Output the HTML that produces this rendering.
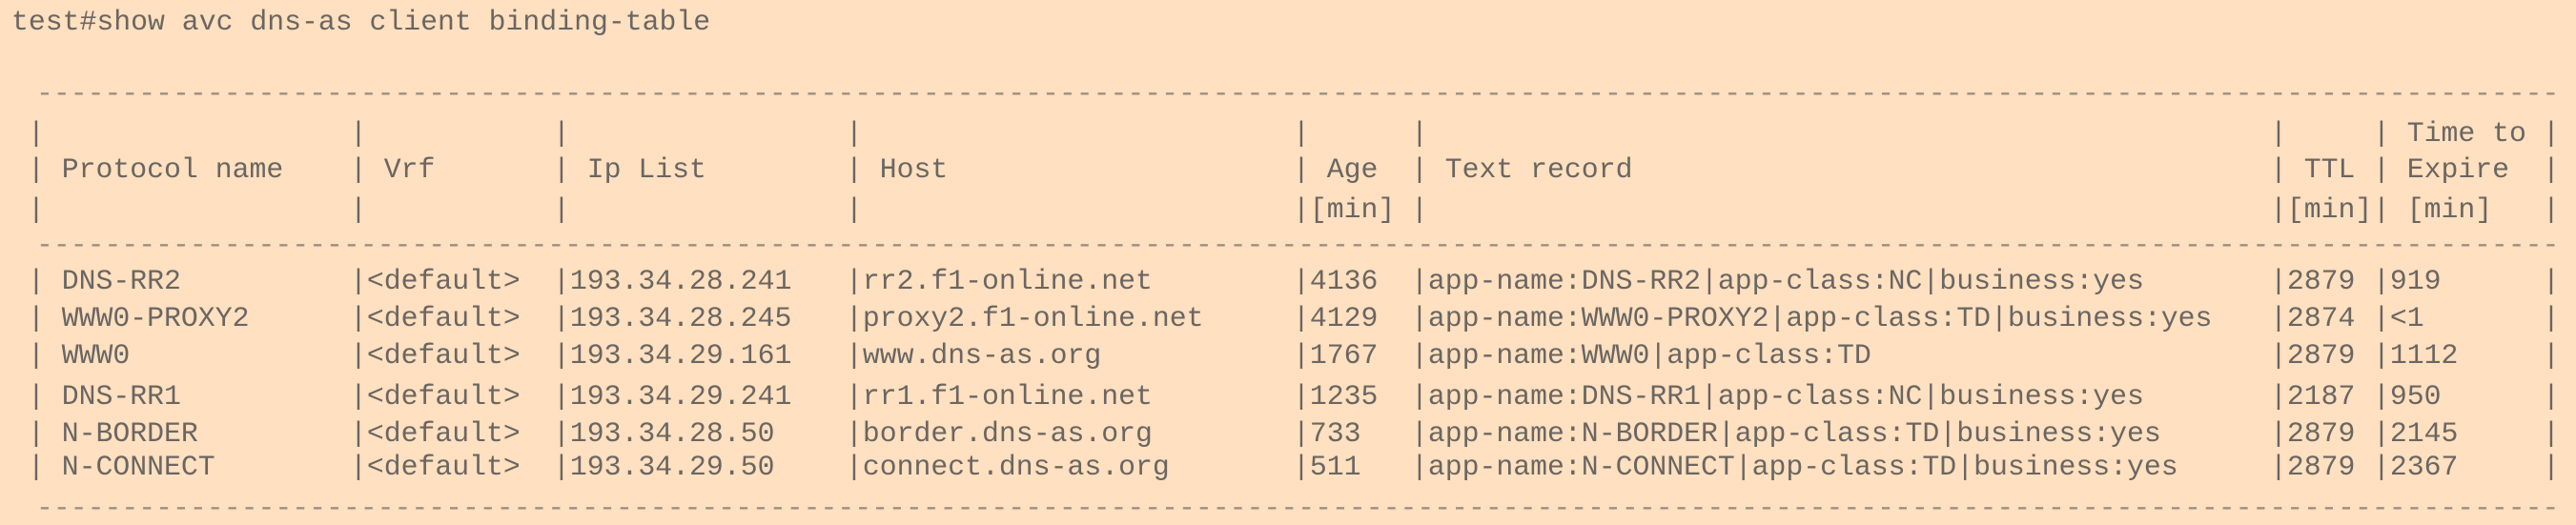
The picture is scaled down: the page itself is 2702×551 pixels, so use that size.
<!DOCTYPE html>
<html><head><meta charset="utf-8"><style>
html,body{margin:0;padding:0;}
body{width:2702px;height:550px;background:#FFE0C0;position:relative;overflow:hidden;
font-family:"Liberation Mono","DejaVu Sans Mono",monospace;font-size:29.8px;color:#6a6662;}
.t{position:absolute;white-space:pre;line-height:36px;height:36px;}
.d{position:absolute;left:38px;width:2644px;overflow:hidden;white-space:pre;color:#9a8e82;line-height:36px;height:36px;}
</style></head><body>
<div class="t" style="left:12px;top:5px">test#show avc dns-as client binding-table</div>
<div class="d" style="top:80px">---------------------------------------------------------------------------------------------------------------------------------------------------------------</div>
<div class="d" style="top:239px">---------------------------------------------------------------------------------------------------------------------------------------------------------------</div>
<div class="d" style="top:515px">---------------------------------------------------------------------------------------------------------------------------------------------------------------</div>
<div id="rows"></div>
<script>
var P=[29,367,580,887,1356,1480,2381,2489,2667];
var rows=[
[122,["|","|","|","|","|","|","|","| Time to","|"]],
[160,["| Protocol name","| Vrf","| Ip List","| Host","| Age","| Text record","| TTL","| Expire","|"]],
[202,["|","|","|","|","|[min]","|","|[min]","| [min]","|"]],
[277,["| DNS-RR2","|<default>","|193.34.28.241","|rr2.f1-online.net","|4136","|app-name:DNS-RR2|app-class:NC|business:yes","|2879","|919","|"]],
[316,["| WWW0-PROXY2","|<default>","|193.34.28.245","|proxy2.f1-online.net","|4129","|app-name:WWW0-PROXY2|app-class:TD|business:yes","|2874","|<1","|"]],
[355,["| WWW0","|<default>","|193.34.29.161","|www.dns-as.org","|1767","|app-name:WWW0|app-class:TD","|2879","|1112","|"]],
[398,["| DNS-RR1","|<default>","|193.34.29.241","|rr1.f1-online.net","|1235","|app-name:DNS-RR1|app-class:NC|business:yes","|2187","|950","|"]],
[437,["| N-BORDER","|<default>","|193.34.28.50","|border.dns-as.org","|733","|app-name:N-BORDER|app-class:TD|business:yes","|2879","|2145","|"]],
[472,["| N-CONNECT","|<default>","|193.34.29.50","|connect.dns-as.org","|511","|app-name:N-CONNECT|app-class:TD|business:yes","|2879","|2367","|"]]
];
var h="";
rows.forEach(function(r){
 var c=r[1];
 if(c.length==10){
  c=["|","|","|","|","|[min]","|","|[min]","| [min]","|"];
 }
 for(var i=0;i<9;i++){
  var s=c[i].replace(/&/g,"&amp;").replace(/</g,"&lt;").replace(/>/g,"&gt;");
  h+='<div class="t" style="left:'+P[i]+'px;top:'+r[0]+'px">'+s+'</div>';
 }
});
document.getElementById("rows").innerHTML=h;
</script>
</body></html>
